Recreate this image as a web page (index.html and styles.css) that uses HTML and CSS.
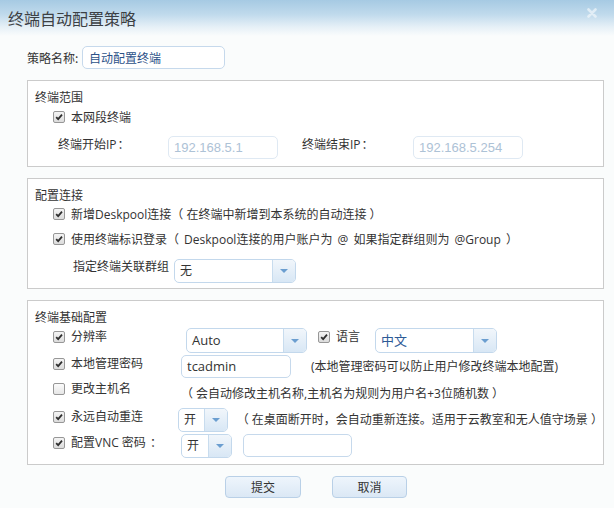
FILE: index.html
```html
<!DOCTYPE html>
<html lang="zh-CN">
<head>
<meta charset="utf-8">
<title>终端自动配置策略</title>
<link rel="stylesheet" href="styles.css">
</head>
<body>
<div class="dialog">
  <div class="titlebar">
    <span class="title">终端自动配置策略</span>
    <svg class="close" width="10" height="10" viewBox="0 0 10 10"><path d="M1.5 1.5 L8.5 8.5 M8.5 1.5 L1.5 8.5" stroke="#eef5fa" stroke-width="2.6" stroke-linecap="round"/></svg>
  </div>
  <div class="content">
    <div class="name-row">
      <span class="name-label">策略名称:</span>
      <div class="input name-input">自动配置终端</div>
    </div>

    <section class="group g1">
      <div class="group-title">终端范围</div>
      <div class="check-row single"><span class="cb on"><svg viewBox="0 0 12 12"><path d="M2.6 6.2 L5 8.6 L9.6 3.2" fill="none" stroke="#2e2e2e" stroke-width="2.1"/></svg></span><span>本网段终端</span></div>
      <div class="ip-row">
        <span class="ip-label">终端开始IP<span class="colon">：</span></span>
        <div class="input ip">192.168.5.1</div>
        <span class="ip-label ip-label2">终端结束IP<span class="colon">：</span></span>
        <div class="input ip">192.168.5.254</div>
      </div>
    </section>

    <section class="group g2">
      <div class="group-title">配置连接</div>
      <div class="check-row"><span class="cb on"><svg viewBox="0 0 12 12"><path d="M2.6 6.2 L5 8.6 L9.6 3.2" fill="none" stroke="#2e2e2e" stroke-width="2.1"/></svg></span><span>新增Deskpool连接（ 在终端中新增到本系统的自动连接 ）</span></div>
      <div class="check-row second"><span class="cb on"><svg viewBox="0 0 12 12"><path d="M2.6 6.2 L5 8.6 L9.6 3.2" fill="none" stroke="#2e2e2e" stroke-width="2.1"/></svg></span><span class="wide">使用终端标识登录（ Deskpool连接的用户账户为 @ 如果指定群组则为 @Group ）</span></div>
      <div class="group-row">
        <span class="group-label">指定终端关联群组</span>
        <div class="select sel-group"><span class="sel-text">无</span><span class="sel-arrow"><i></i></span></div>
      </div>
    </section>

    <section class="group g3">
      <div class="group-title">终端基础配置</div>
      <div class="cfg-row r1">
        <label class="cfg-label"><span class="cb on"><svg viewBox="0 0 12 12"><path d="M2.6 6.2 L5 8.6 L9.6 3.2" fill="none" stroke="#2e2e2e" stroke-width="2.1"/></svg></span>分辨率</label>
        <div class="select sel-res"><span class="sel-text">Auto</span><span class="sel-arrow"><i></i></span></div>
        <label class="lang-label"><span class="cb on"><svg viewBox="0 0 12 12"><path d="M2.6 6.2 L5 8.6 L9.6 3.2" fill="none" stroke="#2e2e2e" stroke-width="2.1"/></svg></span>语言</label>
        <div class="select sel-lang"><span class="sel-text blue">中文</span><span class="sel-arrow"><i></i></span></div>
      </div>
      <div class="cfg-row r2">
        <label class="cfg-label"><span class="cb on"><svg viewBox="0 0 12 12"><path d="M2.6 6.2 L5 8.6 L9.6 3.2" fill="none" stroke="#2e2e2e" stroke-width="2.1"/></svg></span>本地管理密码</label>
        <div class="input pwd">tcadmin</div>
        <span class="note note-pwd">(本地管理密码可以防止用户修改终端本地配置)</span>
      </div>
      <div class="cfg-row r3">
        <label class="cfg-label"><span class="cb"></span>更改主机名</label>
        <span class="note note-host">（ 会自动修改主机名称,主机名为规则为用户名+3位随机数 ）</span>
      </div>
      <div class="cfg-row r4">
        <label class="cfg-label"><span class="cb on"><svg viewBox="0 0 12 12"><path d="M2.6 6.2 L5 8.6 L9.6 3.2" fill="none" stroke="#2e2e2e" stroke-width="2.1"/></svg></span>永远自动重连</label>
        <div class="select sel-small"><span class="sel-text">开</span><span class="sel-arrow"><i></i></span></div>
        <span class="note note-re">（ 在桌面断开时，会自动重新连接。适用于云教室和无人值守场景 ）</span>
      </div>
      <div class="cfg-row r5">
        <label class="cfg-label"><span class="cb on"><svg viewBox="0 0 12 12"><path d="M2.6 6.2 L5 8.6 L9.6 3.2" fill="none" stroke="#2e2e2e" stroke-width="2.1"/></svg></span>配置VNC 密码<span class="colon">：</span></label>
        <div class="select sel-small"><span class="sel-text">开</span><span class="sel-arrow"><i></i></span></div>
        <div class="input vnc"></div>
      </div>
    </section>

    <div class="buttons">
      <button class="btn btn-ok">提交</button>
      <button class="btn btn-cancel">取消</button>
    </div>
  </div>
</div>
</body>
</html>
```

FILE: styles.css
```css
* { box-sizing: border-box; margin: 0; padding: 0; }
html, body { width: 614px; height: 508px; overflow: hidden; }
body {
  font-family: "Open Sans", "Noto Sans CJK SC", sans-serif;
  font-size: 12px;
  color: #333;
  background: #fafcfc;
}
.dialog { width: 614px; height: 508px; background: #fafcfc; }

.titlebar {
  height: 36px;
  background: linear-gradient(to bottom, #a6cae3 0%, #c0daec 40%, #e6f0f7 75%, #fafcfc 100%);
  display: flex;
  justify-content: space-between;
  align-items: flex-start;
  padding: 0 17px 0 8px;
}
.title { font-family: "Noto Sans CJK SC", sans-serif; font-size: 16px; line-height: 36px; color: #3c4044; }
.close { margin-top: 8px; opacity: .75; }

.content { padding: 10px 10px 0 27px; }

.name-row { display: flex; align-items: center; height: 23px; }
.name-label { width: 55px; font-family: "Noto Sans CJK SC", sans-serif; }

.input {
  height: 23px;
  border: 1px solid #c6d9ec;
  border-radius: 5px;
  background: #fff;
  line-height: 21px;
  padding: 0 5px;
  white-space: nowrap;
}
.name-input { width: 143px; color: #2c5288; padding-left: 6px; font-family: "Noto Sans CJK SC", sans-serif; }

.colon { font-family: "Noto Sans CJK TC", sans-serif; margin-left: 1px; }

.group {
  margin-top: 11px;
  border: 1px solid #cbcbcb;
  background: #fff;
  padding: 8px 0 7px 0;
}
.group-title { line-height: 18px; padding-left: 7px; }

.check-row { display: flex; align-items: center; height: 18px; padding-left: 25px; white-space: nowrap; }
.check-row.single { margin-top: 1px; }
.check-row.second { margin-top: 7px; }
.wide { word-spacing: 2px; }

.cb {
  width: 12px; height: 12px;
  flex: none;
  border: 1px solid #979797;
  border-radius: 2px;
  background: linear-gradient(to bottom, #f4f4f4, #dcdcdc);
  margin-right: 6px;
  display: inline-flex;
}
.cb svg { width: 10px; height: 10px; }
.cb:not(.on) { background: linear-gradient(to bottom, #fbfbfb, #e6e6e6); }

.ip-row { display: flex; align-items: flex-start; margin-top: 10px; padding-left: 30px; }
.ip-label { width: 110px; line-height: 15px; white-space: nowrap; }
.ip-label2 { width: 111px; margin-left: 24px; }
.ip { width: 110px; border-color: #dfe9f3; color: #adc2d6; font-family: "Liberation Sans", sans-serif; font-size: 13px; }

.g2 { padding-bottom: 5px; }
.group-row { display: flex; align-items: flex-start; margin-top: 11px; padding-left: 45px; }
.group-label { width: 101px; line-height: 16px; }

.select {
  display: flex;
  height: 24px;
  border: 1px solid #c3d8ec;
  border-radius: 5px;
  background: #fff;
  overflow: hidden;
}
.sel-text { flex: 1; line-height: 22px; padding-left: 5px; white-space: nowrap; }
.sel-text.blue { color: #2d5a96; }
.sel-arrow {
  width: 23px;
  flex: none;
  border-left: 1px solid #c8dcee;
  background: linear-gradient(to bottom, #f1f6fb, #d8e7f5);
  display: flex;
  align-items: center;
  justify-content: center;
}
.sel-arrow i {
  width: 0; height: 0;
  border-left: 4px solid transparent;
  border-right: 4px solid transparent;
  border-top: 4px solid #6b9ed0;
}
.sel-group { width: 122px; }

.g3 { padding-bottom: 6px; }
.cfg-row { display: flex; align-items: flex-start; padding-left: 25px; }
.cfg-label { display: flex; align-items: center; width: 128px; line-height: 16px; padding-top: 1px; white-space: nowrap; }
.r1 { margin-top: 1px; }
.r2 { margin-top: 2px; }
.r3 { margin-top: 2px; height: 27px; }
.r4 { margin-top: 1px; }
.r5 { margin-top: 2px; }

.sel-res { width: 121px; height: 25px; margin-left: 5px; }
.sel-res .sel-text, .sel-lang .sel-text { line-height: 23px; font-size: 13px; }
.lang-label { display: flex; align-items: center; line-height: 16px; padding-top: 1px; margin-left: 11px; width: 57px; }
.sel-lang { width: 122px; height: 25px; }

.pwd { width: 110px; font-size: 13px; }
.note { white-space: nowrap; }
.note-pwd { line-height: 23px; margin-left: 20px; }
.note-host { line-height: 16px; margin-top: 6px; }
.note-re { line-height: 24px; margin-left: 9px; }
.sel-small { width: 51px; }
.vnc { width: 109px; margin-left: 11px; }

.buttons { display: flex; justify-content: center; gap: 31px; margin-top: 11px; padding-left: 1px; }
.btn {
  width: 75px; height: 22px;
  border: 1px solid #b9d0e7;
  border-radius: 4px;
  background: linear-gradient(to bottom, #eef5fc, #dbe8f5);
  font-family: "Noto Sans CJK SC", sans-serif;
  font-size: 12px;
  color: #333;
  line-height: 20px;
}
.btn-ok { width: 76px; }
```
